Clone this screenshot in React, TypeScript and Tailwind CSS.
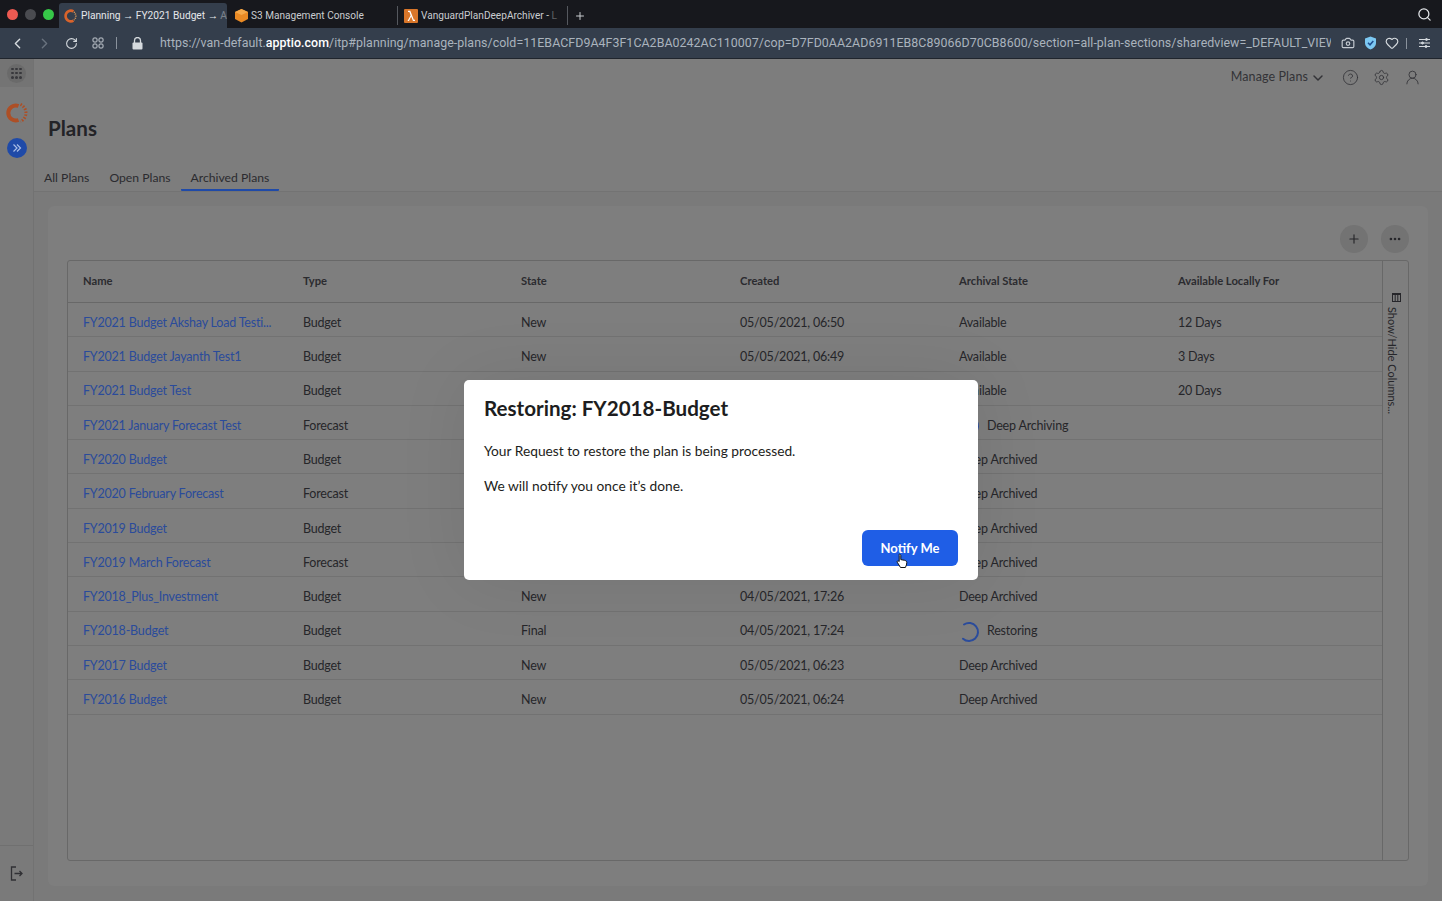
import { ChevronDown, CircleHelp, Settings, UserRound, Plus, Ellipsis, ChevronLeft, ChevronRight, RotateCw, Camera, Heart, Search } from 'lucide-react'

// rows behind the dialog have no readable state or date in the picture
const rows = [
  ['FY2021 Budget Akshay Load Testi...', 'Budget', 'New', '05/05/2021, 06:50', 'Available', '12 Days'],
  ['FY2021 Budget Jayanth Test1', 'Budget', 'New', '05/05/2021, 06:49', 'Available', '3 Days'],
  ['FY2021 Budget Test', 'Budget', '', '', 'Available', '20 Days'],
  ['FY2021 January Forecast Test', 'Forecast', '', '', 'Deep Archiving', ''],
  ['FY2020 Budget', 'Budget', '', '', 'Deep Archived', ''],
  ['FY2020 February Forecast', 'Forecast', '', '', 'Deep Archived', ''],
  ['FY2019 Budget', 'Budget', '', '', 'Deep Archived', ''],
  ['FY2019 March Forecast', 'Forecast', '', '', 'Deep Archived', ''],
  ['FY2018_Plus_Investment', 'Budget', 'New', '04/05/2021, 17:26', 'Deep Archived', ''],
  ['FY2018-Budget', 'Budget', 'Final', '04/05/2021, 17:24', 'Restoring', ''],
  ['FY2017 Budget', 'Budget', 'New', '05/05/2021, 06:23', 'Deep Archived', ''],
  ['FY2016 Budget', 'Budget', 'New', '05/05/2021, 06:24', 'Deep Archived', ''],
]

const headers = ['Name', 'Type', 'State', 'Created', 'Archival State', 'Available Locally For']

function Spinner() {
  return (
    <svg width="22" height="22" viewBox="0 0 22 22" fill="none" className="shrink-0">
      <path d="M6 3.500A9 9 0 1 1 5 17.700" stroke="#2b4c9c" strokeWidth="2" strokeLinecap="round" />
    </svg>
  )
}

function ApptioLogo() {
  return (
    <svg width="22" height="22" viewBox="0 0 22 22" fill="none">
      <path d="M12.500 4A7.500 7.500 0 1 0 12.500 18" stroke="#ad4f26" strokeWidth="4" />
      <path d="M14.500 2.400A9.500 9.500 0 0 1 14.500 19.600" stroke="#ad4f26" strokeWidth="3" strokeDasharray="1.500 1.500" />
    </svg>
  )
}

function AwsCube() {
  return (
    <svg width="15" height="15" viewBox="0 0 15 15">
      <path d="M7.500 1 14 4v7l-6.500 3.500L1 11V4z" fill="#ea8a24" />
      <path d="M7.500 7 14 4 7.500 1 1 4z" fill="#f6a94a" />
    </svg>
  )
}

function LambdaIcon() {
  return (
    <svg width="14" height="14" viewBox="0 0 14 14">
      <rect width="14" height="14" rx="1" fill="#d9762a" />
      <path d="M3.500 12 6.600 6.400 5.400 3H4V1.800h2.300L9.800 10.800H11V12H9L7.200 7.600 5 12z" fill="#fff" />
    </svg>
  )
}

function BrowserChrome() {
  return (
    <div className="shrink-0 font-['Roboto',sans-serif]">
      <div className="h-[28px] bg-[#17181d] flex items-end">
        <div className="flex items-center gap-[7px] pl-[7px] w-[59px] h-full">
          <span className="w-[11px] h-[11px] rounded-full bg-[#ee5a52]" />
          <span className="w-[11px] h-[11px] rounded-full bg-[#4a4b50]" />
          <span className="w-[11px] h-[11px] rounded-full bg-[#36c748]" />
        </div>
        <div className="w-[168px] h-[25px] bg-[#343e4c] rounded-t-[3px] flex items-center pl-[5px] gap-[3px] overflow-hidden">
          <svg width="14" height="14" viewBox="0 0 14 14" fill="none" className="shrink-0">
            <path d="M9.500 2.400A5.300 5.300 0 1 0 9.500 11.600" stroke="#d9632b" strokeWidth="2.600" />
            <path d="M10 3A5.300 5.300 0 0 1 10 11" stroke="#e8a15c" strokeWidth="1.600" strokeDasharray="1 1" />
          </svg>
          <span className="text-[10.200px] text-[#e4e7ea] whitespace-nowrap">
            Planning → FY2021 Budget → <span className="opacity-40">A</span>
          </span>
        </div>
        <div className="w-[170px] h-[25px] flex items-center pl-[7px] gap-[2px]">
          <AwsCube />
          <span className="text-[10.100px] text-[#c9ccd0] whitespace-nowrap">S3 Management Console</span>
        </div>
        <div className="h-[19px] mb-[3px] flex items-center pl-[6px] gap-[3px] w-[170px] border-l border-[#55585e]">
          <LambdaIcon />
          <span className="text-[10.100px] text-[#c9ccd0] whitespace-nowrap">
            VanguardPlanDeepArchiver - <span className="opacity-40">L</span>
          </span>
        </div>
        <div className="h-[19px] mb-[3px] flex items-center border-l border-[#55585e] pl-[6px]">
          <Plus size={12} color="#c9ccd0" />
        </div>
        <div className="flex-1 h-full flex items-center justify-end pr-[10px]">
          <Search size={15} color="#e4e7ea" />
        </div>
      </div>
      <div className="h-[31px] bg-[#343e4c] border-b border-[#20252d] flex items-center text-[#c5cbd2]">
        <div className="w-[160px] flex items-center shrink-0 pl-[9px]">
          <ChevronLeft size={17} color="#d5dade" />
          <ChevronRight size={17} color="#69727e" className="ml-[10px]" />
          <RotateCw size={13} color="#d5dade" className="ml-[12px]" />
          <svg width="12" height="12" viewBox="0 0 12 12" fill="none" stroke="#c5cbd2" className="ml-[14px]">
            <rect x="1" y="1" width="4" height="4" rx="1" />
            <rect x="7" y="1" width="4" height="4" rx="1" />
            <rect x="1" y="7" width="4" height="4" rx="1" />
            <rect x="7" y="7" width="4" height="4" rx="1" />
          </svg>
          <span className="w-px h-[12px] bg-[#8a929c] ml-[12px]" />
          <svg width="11" height="13" viewBox="0 0 11 13" className="ml-[15px]">
            <rect x="0.500" y="5.500" width="10" height="7" rx="1" fill="#d5dade" />
            <path d="M2.500 6V3.500a3 3 0 0 1 6 0V6" fill="none" stroke="#d5dade" strokeWidth="1.300" />
          </svg>
        </div>
        <div className="w-[1171px] overflow-hidden whitespace-nowrap text-[12.400px] tracking-[0.05px] text-[#aab3bd]">
          https://van-default.<span className="text-white font-medium">apptio.com</span>/itp#planning/manage-plans/cold=11EBACFD9A4F3F1CA2BA0242AC110007/cop=D7FD0AA2AD6911EB8C89066D70CB8600/section=all-plan-sections/sharedview=_DEFAULT_VIEW
        </div>
        <div className="flex items-center pl-[10px]">
          <Camera size={14} color="#c5cbd2" />
          <svg width="13" height="14" viewBox="0 0 13 14" className="ml-[9px]">
            <path d="M6.500 0.500 12 2.500V7c0 3-2.500 5.500-5.500 6.500C3.500 12.500 1 10 1 7V2.500z" fill="#7cc8f2" />
            <path d="M4 6.800 6 8.800 9.300 5" fill="none" stroke="#1d4c8f" strokeWidth="1.500" />
          </svg>
          <Heart size={14} color="#d5dade" className="ml-[8px]" />
          <span className="w-px h-[11px] bg-[#8a929c] ml-[7px]" />
          <svg width="11" height="10" viewBox="0 0 11 10" stroke="#d5dade" fill="#d5dade" className="ml-[12px]">
            <path d="M0 1.500h11M0 5h11M0 8.500h11" />
            <circle cx="7.500" cy="1.500" r="1" />
            <circle cx="3.500" cy="5" r="1" />
            <circle cx="7" cy="8.500" r="1" />
          </svg>
        </div>
      </div>
    </div>
  )
}

function Sidebar() {
  return (
    <div className="w-[34px] shrink-0 bg-[#7a7a7a] border-r border-[#727272] flex flex-col items-center">
      <div className="h-[28px] w-full bg-[#747474] flex items-center justify-center">
        <span className="w-[19px] h-[19px] rounded-full bg-[#6a6a6a] grid grid-cols-3 gap-[1.500px] p-[4px]">
          {Array.from({ length: 9 }).map((_, i) => (
            <span key={i} className="bg-[#38383c] rounded-full" />
          ))}
        </span>
      </div>
      <div className="mt-[15px]">
        <ApptioLogo />
      </div>
      <div className="mt-[14px] w-[20px] h-[20px] rounded-full bg-[#1f4aa8] flex items-center justify-center text-[#a9bde6]">
        <svg width="10" height="10" viewBox="0 0 10 10" fill="none" stroke="currentColor" strokeWidth="1.200">
          <path d="M1.500 1.500 5 5l-3.500 3.500M5 1.500 8.500 5 5 8.500" />
        </svg>
      </div>
      <div className="mt-auto w-full h-[56px] border-t border-[#707070] flex items-center justify-center">
        <svg width="13" height="15" viewBox="0 0 13 15" fill="none" stroke="#303034" strokeWidth="1.300">
          <path d="M6 1H1.500v13H6" />
          <path d="M4.500 7.500H12M9.500 5l2.500 2.500L9.500 10" />
        </svg>
      </div>
    </div>
  )
}

function ArchivalCell({ value }: { value: string }) {
  if (value === 'Restoring' || value === 'Deep Archiving') {
    return (
      <span className="flex items-center gap-[7px] -ml-[1px]">
        <Spinner />
        {value}
      </span>
    )
  }
  return <span>{value}</span>
}

function PlansTable() {
  return (
    <div className="h-[601px] mx-[19px] mb-[25px] border border-[#686868] rounded-[3px] flex">
      <div className="w-[1314px]">
        <div className="grid grid-cols-6 h-[42px] pb-[1px] items-center border-b border-[#686868] text-[11.200px] font-bold text-[#2b2b2f]">
          {headers.map((h, i) => (
            <div key={h} className={i === 1 ? 'pl-[16px]' : 'pl-[15px]'}>
              {h}
            </div>
          ))}
        </div>
        {rows.map((r) => (
          <div key={r[0]} className="grid grid-cols-6 h-[34.300px] pt-[7px] items-center border-b border-[#727272] text-[12.500px] tracking-[-0.2px] text-[#26262a]">
            <div className="pl-[15px] text-[#2a4b9b] whitespace-nowrap">{r[0]}</div>
            <div className="pl-[16px]">{r[1]}</div>
            <div className="pl-[15px]">{r[2]}</div>
            <div className="pl-[15px]">{r[3]}</div>
            <div className="pl-[15px] h-[20px] flex items-center">
              <ArchivalCell value={r[4]} />
            </div>
            <div className="pl-[15px]">{r[5]}</div>
          </div>
        ))}
      </div>
      <div className="flex-1 border-l border-[#686868] flex flex-col items-center pt-[32px] text-[#26262a]">
        <svg width="9" height="9" viewBox="0 0 9 9" fill="none" stroke="#26262a" className="ml-[2px]">
          <rect x="0.500" y="0.500" width="8" height="8" />
          <path d="M0 1.500h9M3.200 1v8M5.800 1v8" />
        </svg>
        <span className="[writing-mode:vertical-rl] text-[11px] mt-[5px] -ml-[8px]">Show/Hide Columns...</span>
      </div>
    </div>
  )
}

function Modal() {
  return (
    <div className="absolute left-[464px] top-[380px] w-[514px] h-[200px] bg-white rounded-[5px] px-[20px] pt-[16px] shadow-[0_0_70px_rgba(0,0,0,0.08)] flex flex-col text-[#1d1d20]">
      <h2 className="text-[20.600px] font-bold leading-[24px]">Restoring: FY2018-Budget</h2>
      <p className="text-[13.750px] leading-[20px] mt-[21px]">Your Request to restore the plan is being processed.</p>
      <p className="text-[13.750px] leading-[20px] mt-[15px]">We will notify you once it’s done.</p>
      <div className="mt-auto mb-[14px] flex justify-end">
        <button className="relative w-[96px] h-[36px] pt-[2px] bg-[#1f5ee6] rounded-[6px] text-white font-bold text-[13px]">
          Notify Me
          <svg width="13" height="16" viewBox="0 0 13 16" className="absolute left-[34px] top-[23px]">
            <path d="M3.500 1.200c.8 0 1.300.6 1.300 1.400v4l3.700.7c1.300.3 2.300.9 2.300 2.200 0 1.500-.5 3.300-1.400 5H4.500L1.300 9.300c-.4-.7 0-1.400.7-1.400.5 0 .9.3 1.200.7V2.600c0-.8-.5-1.400.3-1.400z" fill="#fff" stroke="#111" strokeWidth="1" />
          </svg>
        </button>
      </div>
    </div>
  )
}

export default function App() {
  return (
    <div className="relative h-[901px] w-[1442px] overflow-hidden flex flex-col bg-[#7a7a7a] font-['Lato',sans-serif]">
      <BrowserChrome />
      <div className="flex-1 flex min-h-0">
        <Sidebar />
        <div className="flex-1 min-w-0 flex flex-col">
          <div className="h-[133px] pl-[14px] border-b border-[#737373] bg-[#7d7d7d] flex flex-col">
            <div className="h-[34px] pt-[3px] flex items-center justify-end text-[#333337] pr-[21px]">
              <span className="text-[12.500px] tracking-[0.1px]">Manage Plans</span>
              <ChevronDown size={16} strokeWidth={2.200} className="ml-[2px]" />
              <CircleHelp size={17} strokeWidth={1.200} className="ml-[16px]" />
              <Settings size={17} strokeWidth={1.200} className="ml-[14px]" />
              <UserRound size={17} strokeWidth={1.200} className="ml-[14px]" />
            </div>
            <h1 className="text-[20.600px] font-bold text-[#232327] leading-[26px] mt-[22px]">Plans</h1>
            <div className="flex mt-auto -ml-[4px] text-[12.200px] text-[#2b2b2f]">
              <span className="h-[24px] mr-[20px] leading-[21px]">All Plans</span>
              <span className="h-[24px] mr-[10px] leading-[21px]">Open Plans</span>
              <span className="h-[24px] leading-[21px] px-[10px] border-b-[2px] border-[#1f4aa8] rounded-b-[1px]">Archived Plans</span>
            </div>
          </div>
          <div className="flex-1 bg-[#7a7a7a] px-[14px] pt-[14px] min-h-0">
            <div className="bg-[#7e7e7e] rounded-[6px] h-[680px] flex flex-col">
              <div className="h-[54px] flex items-end justify-end gap-[13px] pr-[19px] pb-[7px]">
                <span className="w-[28px] h-[28px] rounded-full bg-[#737373] flex items-center justify-center">
                  <Plus size={14} color="#26262a" />
                </span>
                <span className="w-[28px] h-[28px] rounded-full bg-[#737373] flex items-center justify-center">
                  <Ellipsis size={14} color="#26262a" strokeWidth={2.500} />
                </span>
              </div>
              <PlansTable />
            </div>
          </div>
        </div>
      </div>
      <Modal />
    </div>
  )
}
